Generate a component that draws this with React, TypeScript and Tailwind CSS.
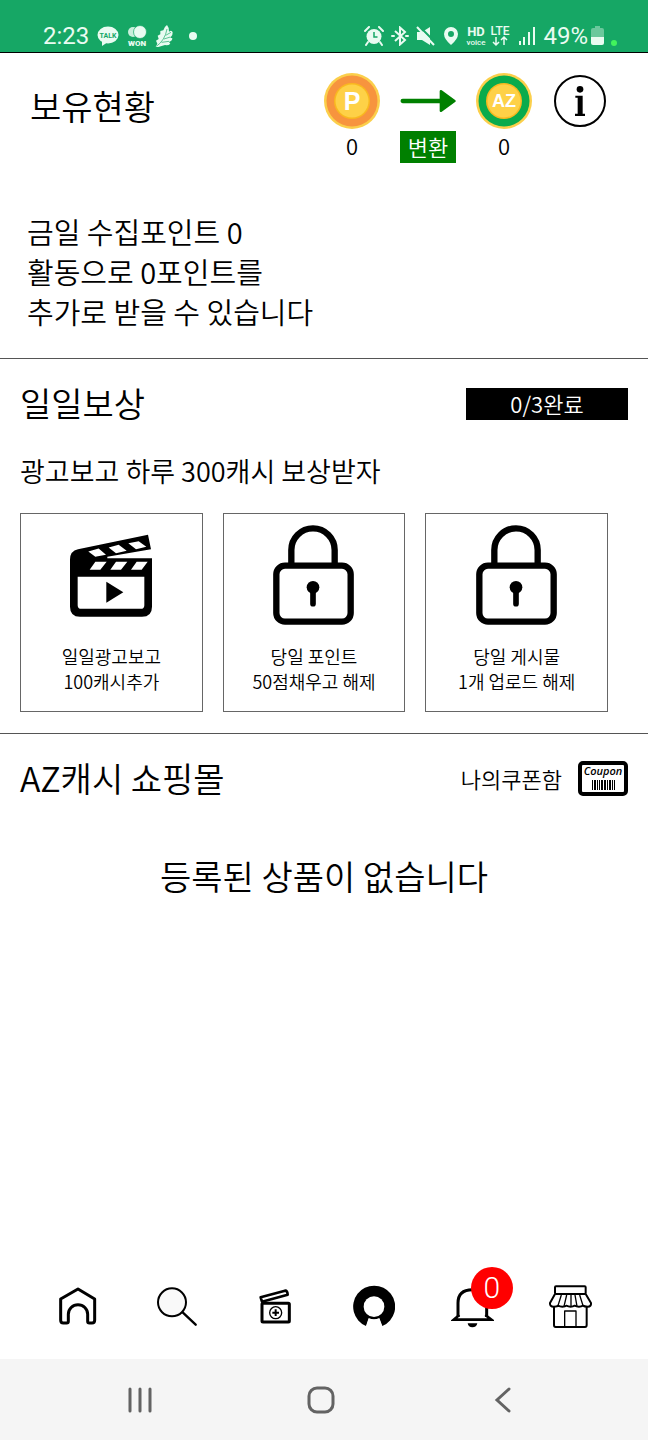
import type { ReactNode } from "react";

const Clapper = () => (
  <svg width="82" height="83" viewBox="0 0 246 248">
    <path
      fillRule="evenodd"
      d="M0 76Q0 50 24 45L234 2L243 45L112 68V72H246V218Q246 248 216 248H30Q0 248 0 218Z
      M55 52L76 68L108 62L86 43Z M116 40L138 57L170 50L146 32Z M175 27L198 45L229 38L206 21Z
      M76 83H110L91 107H59Z M138 83H172L153 107H121Z M200 83H233L215 107H183Z
      M23 128H223V213Q223 224 212 224H34Q23 224 23 213Z"
    />
    <path d="M109 143L160 174L109 206Z" />
  </svg>
);

const Lock = () => (
  <svg width="81" height="100" viewBox="0 0 243 300" fill="none" stroke="#000" strokeWidth="19">
    <path d="M55 120V75a65 65 0 0 1 130 0V120" />
    <rect x="10" y="122" width="223" height="168" rx="26" />
    <circle cx="120" cy="187" r="19" fill="#000" stroke="none" />
    <path d="M120 187V236" strokeWidth="17" strokeLinecap="round" />
  </svg>
);

const Coin = ({ label, ring, size }: { label: string; ring: string; size: number }) => (
  <svg width="56" height="56" viewBox="0 0 56 56">
    <circle cx="28" cy="28" r="28" fill="#fbcf4b" />
    <circle cx="28" cy="28" r="25.5" fill={ring} />
    <circle cx="28" cy="28" r="18" fill="#f9b81f" />
    <circle cx="28" cy="28" r="16.5" fill="#fed147" />
    <text
      x="28"
      y={28 + size * 0.36}
      textAnchor="middle"
      fontSize={size}
      fontWeight="700"
      fontFamily="Liberation Sans, sans-serif"
      fill="#fff"
    >
      {label}
    </text>
  </svg>
);

const InfoIcon = () => (
  <svg width="52" height="52" viewBox="0 0 156 156">
    <circle cx="78" cy="78" r="75" fill="none" stroke="#000" strokeWidth="6" />
    <circle cx="78" cy="43" r="10" />
    <path d="M64 62H86V116H93V123H63V116H71V68H64Z" />
  </svg>
);

const CouponIcon = () => (
  <svg width="50" height="35" viewBox="0 0 50 35">
    <rect x="2" y="2" width="46" height="31" rx="3" fill="none" stroke="#000" strokeWidth="4" />
    <text x="25" y="14" textAnchor="middle" fontSize="11" fontStyle="italic" fontWeight="600" fontFamily="Open Sans, sans-serif">
      Coupon
    </text>
    <path d="M14 19h1v10h-1zM16 19h2v10h-2zM19 19h1v10h-1zM21 19h1v10h-1zM23 19h2v10h-2zM26 19h2v10h-2zM29 19h1v10h-1zM31 19h2v10h-2zM34 19h1v10h-1zM36 19h1v10h-1z" />
  </svg>
);

const HomeIcon = () => (
  <svg width="38" height="38" viewBox="0 0 114 114" fill="none" stroke="#000" strokeWidth="9" strokeLinejoin="round">
    <path d="M57 6L107 36V100q0 8-8 8H91q-5 0-5-5V82a29 29 0 0 0-58 0V103q0 5-5 5H13q-8 0-8-8V36Z" />
  </svg>
);

const SearchIcon = () => (
  <svg width="40" height="39" viewBox="0 0 120 117" stroke="#000" strokeLinecap="round">
    <circle cx="45" cy="46" r="42" fill="#f9f9f9" strokeWidth="6" />
    <path d="M77 76L116 113" strokeWidth="7" />
  </svg>
);

const AdIcon = () => (
  <svg width="32" height="35" viewBox="0 0 96 105" fill="none" stroke="#000" strokeLinejoin="round">
    <path d="M5 25L78 5Q85 4 86 17L9 38Z" strokeWidth="8" />
    <rect x="9" y="43" width="82" height="56" rx="3" strokeWidth="9" />
    <circle cx="50" cy="71" r="18" strokeWidth="4" />
    <path d="M50 61V81M40 71H60" strokeWidth="6" />
  </svg>
);

const ProfileIcon = () => (
  <svg width="42" height="42" viewBox="0 0 126 126">
    <path d="M39 123A63 63 0 1 1 88 123L79 99A35 35 0 0 1 47 99Z" />
    <circle cx="63" cy="65" r="31" fill="#fff" />
    <path d="M47 102L39 126H88L79 102Q63 106 47 102Z" fill="#fff" />
  </svg>
);

const BellIcon = () => (
  <svg width="43" height="43" viewBox="0 0 129 129" fill="none" stroke="#000">
    <path d="M21 96V54Q21 14 64 14Q107 14 107 54V96" strokeWidth="9" />
    <path d="M25 90L8 104H121L103 90" strokeWidth="8" />
    <path d="M50 115H79Q77 127 64 127Q52 127 50 115Z" fill="#000" stroke="none" />
  </svg>
);

const ShopIcon = () => (
  <svg width="43" height="43" viewBox="0 0 129 129" fill="none" stroke="#000" strokeWidth="6" strokeLinejoin="round">
    <rect x="18" y="4" width="92" height="23" rx="3" />
    <path d="M18 27L3 54Q2 65 14 65Q25 65 27 62Q33 65 40 65Q49 65 52 62Q58 65 65 65Q72 65 77 62Q82 65 90 65Q97 65 102 62Q106 65 116 65Q127 65 126 54L110 27" />
    <path d="M37 30L27 62M53 30L45 64M66 30V64M78 30L84 64M92 30L102 62" strokeWidth="4" />
    <path d="M15 66V120Q15 126 20 126H108Q113 126 113 120V66" />
    <path d="M47 126V78H81V126" strokeWidth="4" />
  </svg>
);

const StatusBar = () => (
  <div className="flex h-[53px] items-end justify-between border-b border-black bg-[#16a765] pr-[31px] pb-0.5 pl-[43px] font-[Roboto,sans-serif] text-2xl font-normal text-[#e9fbf1]">
    <div className="flex items-center gap-2">
      <span className="leading-7">2:23</span>
      <svg width="22" height="20" viewBox="0 0 22 20" fill="currentColor">
        <ellipse cx="11" cy="9" rx="10.5" ry="8.5" />
        <path d="M5 14L5 20L11 16Z" />
        <text x="11" y="11.5" textAnchor="middle" fontSize="7" fontWeight="700" fill="#16a765">TALK</text>
      </svg>
      <svg width="20" height="22" viewBox="0 0 20 22" fill="currentColor">
        <circle cx="6" cy="7" r="5" opacity="0.85" />
        <circle cx="13" cy="7" r="6.5" stroke="#16a765" strokeWidth="0.7" />
        <text x="10" y="21" textAnchor="middle" fontSize="8" fontWeight="900">WON</text>
      </svg>
      <svg width="18" height="22" viewBox="0 0 54 66" fill="currentColor">
        <path d="M36 0Q43 8 42 20Q50 14 53 22Q54 32 46 38L52 40Q52 48 42 51L46 56Q40 62 30 60L10 66H2L7 56L3 47L11 42L8 32L16 28L16 18L25 16Q27 6 36 0Z" />
        <path d="M4 64Q30 46 36 12M27 42L46 36M20 52L42 49M32 31L48 22" fill="none" stroke="#16a765" strokeWidth="2" />
      </svg>
      <span className="ml-2 size-2 rounded-full bg-current" />
    </div>
    <div className="flex items-center gap-[7px]">
      <svg width="20" height="20" viewBox="0 0 20 20" fill="currentColor">
        <circle cx="10" cy="10.500" r="7.500" />
        <path d="M1 5L5 1M15 1L19 5M4 16L2 19M16 16L18 19" stroke="currentColor" strokeWidth="2" strokeLinecap="round" />
        <path d="M10 6V11H13.500" fill="none" stroke="#16a765" strokeWidth="1.500" />
      </svg>
      <svg width="18" height="20" viewBox="0 0 18 20" fill="none" stroke="currentColor" strokeWidth="2">
        <path d="M4 5L14 14L9 18.500V1.500L14 6L4 15" />
        <path d="M1 10H3M15 10H17" strokeLinecap="round" />
      </svg>
      <svg width="20" height="20" viewBox="0 0 20 20" fill="currentColor">
        <path d="M1 6H6L14 1V19L6 14H1Z" />
        <path d="M3 0L20 17" stroke="#16a765" strokeWidth="2" />
        <path d="M1 1L18 19" stroke="currentColor" strokeWidth="2" />
      </svg>
      <svg width="16" height="20" viewBox="0 0 16 20" fill="currentColor">
        <path fillRule="evenodd" d="M8 1a7 7 0 0 1 7 7Q15 13 8 19Q1 13 1 8A7 7 0 0 1 8 1ZM8 5a3 3 0 1 0 0 6a3 3 0 0 0 0-6Z" />
      </svg>
      <svg width="20" height="22" viewBox="0 0 20 22" fill="currentColor">
        <text x="10" y="11" textAnchor="middle" fontSize="13" fontWeight="700">HD</text>
        <text x="10" y="20" textAnchor="middle" fontSize="8" fontWeight="500">voice</text>
      </svg>
      <svg className="-ml-1" width="22" height="22" viewBox="0 0 22 22" fill="currentColor">
        <text x="11" y="10" textAnchor="middle" fontSize="12" fontWeight="500">LTE</text>
        <path d="M7 12V20M4 17L7 20L10 17M15 20V12M12 15L15 12L18 15" fill="none" stroke="currentColor" strokeWidth="1.500" />
      </svg>
      <svg width="18" height="20" viewBox="0 0 18 20" fill="currentColor">
        <path d="M1 15h2v4H1zM5 11h2v8H5zM10 6h2v13h-2zM15 1h2v18h-2z" />
      </svg>
      <span className="leading-7">49%</span>
      <svg className="-ml-1" width="26" height="20" viewBox="0 0 26 20" fill="currentColor">
        <path d="M0 4Q0 2 2 2H4V0H9V2H11Q13 2 13 4V11H0Z" opacity="0.4" />
        <path d="M0 11H13V17Q13 19 11 19H2Q0 19 0 17Z" />
        <circle cx="23" cy="17" r="3" fill="#42f35c" />
      </svg>
    </div>
  </div>
);

const rewards = [
  { icon: <Clapper />, lines: ["일일광고보고", "100캐시추가"] },
  { icon: <Lock />, lines: ["당일 포인트", "50점채우고 해제"] },
  { icon: <Lock />, lines: ["당일 게시물", "1개 업로드 해제"] },
];

const tabs: { label: string; icon: ReactNode; badge?: number }[] = [
  { label: "홈", icon: <HomeIcon /> },
  { label: "검색", icon: <SearchIcon /> },
  { label: "광고", icon: <AdIcon /> },
  { label: "프로필", icon: <ProfileIcon /> },
  { label: "알림", icon: <BellIcon />, badge: 0 },
  { label: "쇼핑몰", icon: <ShopIcon /> },
];

const Balance = () => (
  <section className="border-b border-[#555] pt-5 pb-[27px]">
    <div className="flex items-start justify-between pr-[42px] pl-[30px]">
      <h1 className="mt-2 text-[34px] leading-[50px]">보유현황</h1>
      <div className="flex items-start gap-5 text-[22px] leading-8">
        <div className="flex flex-col items-center">
          <Coin label="P" ring="#f7943e" size={25} />
          <span>0</span>
        </div>
        <div className="flex flex-col gap-0.5">
          <div className="flex h-14 items-center">
            <svg width="56" height="24" viewBox="0 0 168 72" fill="#008000" stroke="#008000">
              <path d="M8 36H125" strokeWidth="13" strokeLinecap="round" />
              <path d="M123 7L163 36L123 65Z" strokeWidth="8" strokeLinejoin="round" />
            </svg>
          </div>
          <button className="bg-[#008000] pb-0.5 leading-[30px] text-white">변환</button>
        </div>
        <div className="flex flex-col items-center">
          <Coin label="AZ" ring="#09ab4c" size={18} />
          <span>0</span>
        </div>
        <button className="mt-0.5 ml-0.5" aria-label="안내">
          <InfoIcon />
        </button>
      </div>
    </div>
    <p className="px-[27px] pt-12 text-[29px] leading-10">
      금일 수집포인트 0<br />
      활동으로 0포인트를<br />
      추가로 받을 수 있습니다
    </p>
  </section>
);

const DailyReward = () => (
  <section className="border-b border-[#555] px-5 pt-5 pb-[21px]">
    <div className="flex items-center justify-between">
      <h2 className="pb-0.5 text-[34px] leading-[48px]">일일보상</h2>
      <span className="w-1/4 min-w-[162px] bg-black pb-0.5 text-center text-[22px] leading-[30px] text-white">0/3완료</span>
    </div>
    <p className="mt-[22px] text-[27px] leading-10">광고보고 하루 300캐시 보상받자</p>
    <div className="mt-[22px] mr-5 grid grid-cols-3 gap-5">
      {rewards.map((item) => (
        <button key={item.lines[1]} className="flex flex-col items-center border border-[#666] pb-[17px]">
          <span className="flex h-[122px] items-center">{item.icon}</span>
          <span className="mt-2 text-lg leading-[25px]">
            {item.lines[0]}
            <br />
            {item.lines[1]}
          </span>
        </button>
      ))}
    </div>
  </section>
);

const Shop = () => (
  <section className="px-5 pt-[19px]">
    <div className="flex items-center justify-between">
      <h2 className="text-[34px] leading-[50px]">AZ캐시 쇼핑몰</h2>
      <button className="flex items-center gap-4 text-[22px]">
        나의쿠폰함
        <CouponIcon />
      </button>
    </div>
    <p className="mt-12 text-center text-[34px] leading-[50px]">등록된 상품이 없습니다</p>
  </section>
);

const TabBar = () => (
  <nav className="grid h-[106px] grid-cols-6 items-center pr-7 pl-[29px]">
    {tabs.map((tab) => (
      <button key={tab.label} aria-label={tab.label} className="flex justify-center">
        <span className="relative">
          {tab.icon}
          {tab.badge !== undefined && (
            <span className="absolute -top-[18px] left-5 size-[42px] rounded-full bg-[#f00] text-center font-[Roboto,sans-serif] text-[30px] leading-[42px] font-light text-white">
              {tab.badge}
            </span>
          )}
        </span>
      </button>
    ))}
  </nav>
);

const SystemBar = () => (
  <div className="grid h-[81px] grid-cols-3 items-center bg-[#f5f5f5] pr-[54px] pl-[49px]">
    <button aria-label="최근 앱" className="flex justify-center">
      <svg width="26" height="28" viewBox="0 0 26 28" stroke="#636363" strokeWidth="3" strokeLinecap="round">
        <path d="M3 3V25M13 3V25M23 3V25" />
      </svg>
    </button>
    <button aria-label="홈 화면" className="flex justify-center">
      <svg width="28" height="28" viewBox="0 0 28 28" fill="none" stroke="#636363" strokeWidth="3">
        <rect x="2" y="2" width="24" height="24" rx="8" />
      </svg>
    </button>
    <button aria-label="뒤로" className="flex justify-center">
      <svg width="18" height="28" viewBox="0 0 18 28" fill="none" stroke="#636363" strokeWidth="3" strokeLinecap="round">
        <path d="M15 3L3 14L15 25" />
      </svg>
    </button>
  </div>
);

const App = () => {
  return (
    <div className="flex min-h-screen flex-col bg-white font-['Noto_Sans_CJK_KR',sans-serif] font-[350] text-black">
      <StatusBar />
      <main className="flex-1">
        <Balance />
        <DailyReward />
        <Shop />
      </main>
      <TabBar />
      <SystemBar />
    </div>
  );
};

export default App;
